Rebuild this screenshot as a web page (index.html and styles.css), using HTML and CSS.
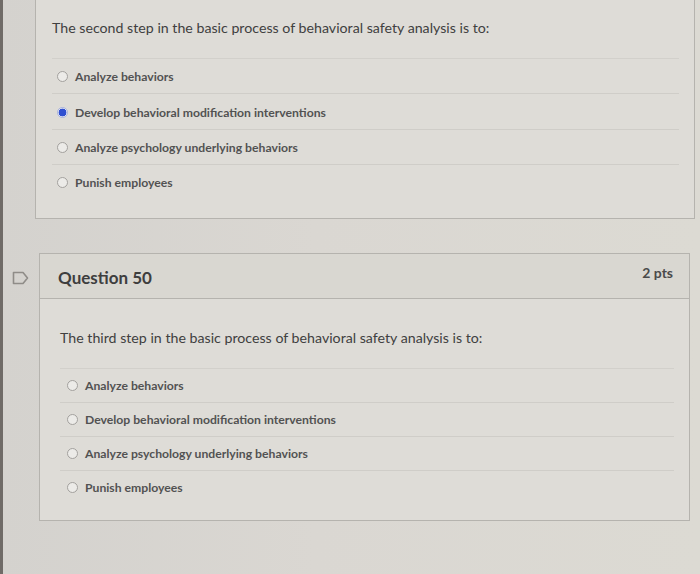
FILE: index.html
```html
<!DOCTYPE html>
<html lang="en">
<head>
<meta charset="utf-8">
<title>Quiz</title>
<link rel="stylesheet" href="styles.css">
</head>
<body>
<div class="page">
  <section class="card card-prev">
    <div class="card-body">
      <p class="prompt">The second step in the basic process of behavioral safety analysis is to:</p>
      <ul class="answers">
        <li class="answer"><span class="radio"></span><span>Analyze behaviors</span></li>
        <li class="answer"><span class="radio checked"></span><span>Develop behavioral modification interventions</span></li>
        <li class="answer"><span class="radio"></span><span>Analyze psychology underlying behaviors</span></li>
        <li class="answer"><span class="radio"></span><span>Punish employees</span></li>
      </ul>
    </div>
  </section>

  <div class="question-row">
    <svg class="flag" width="17" height="14" viewBox="0 0 17 14">
      <path d="M1.5 1.5 H11 L15.5 7 L11 12.5 H1.5 Z" fill="none" stroke="#8f8c88" stroke-width="1.6" stroke-linejoin="round"/>
    </svg>
    <section class="card card-current">
      <header class="card-header">
        <h2 class="q-title">Question 50</h2>
        <span class="pts">2 pts</span>
      </header>
      <div class="card-body">
        <p class="prompt">The third step in the basic process of behavioral safety analysis is to:</p>
        <ul class="answers">
          <li class="answer"><span class="radio"></span><span>Analyze behaviors</span></li>
          <li class="answer"><span class="radio"></span><span>Develop behavioral modification interventions</span></li>
          <li class="answer"><span class="radio"></span><span>Analyze psychology underlying behaviors</span></li>
          <li class="answer"><span class="radio"></span><span>Punish employees</span></li>
        </ul>
      </div>
    </section>
  </div>
</div>
</body>
</html>
```

FILE: styles.css
```css
* { box-sizing: border-box; }

html, body {
  margin: 0;
  height: 100%;
}

body {
  background: linear-gradient(90deg, #d4d2ce 0%, #dad7d2 45%, #dcdad3 100%);
  border-left: 3px solid #6f6b67;
  font-family: Lato, "Open Sans", sans-serif;
  color: #454545;
  overflow: hidden;
}

.page {
  display: flex;
  flex-direction: column;
  height: 574px;
}

.card {
  background: #dedcd7;
  border: 1.5px solid #b5b3ae;
}

.card-prev {
  margin-left: 32px;
  margin-right: 5px;
  border-top: none;
  height: 219px;
}

.card-prev .card-body {
  padding: 19px 15px 0 16px;
}

.question-row {
  display: flex;
  align-items: flex-start;
  margin-top: 34px;
  margin-left: 9px;
  margin-right: 10px;
}

.flag {
  margin-top: 18px;
  flex: none;
}

.card-current {
  flex: 1;
  margin-left: 10px;
  height: 268px;
}

.card-header {
  display: flex;
  justify-content: space-between;
  align-items: center;
  height: 45px;
  padding: 0 16px 0 18px;
  background: #d9d7d1;
  border-bottom: 1.5px solid #b5b3ae;
}

.q-title {
  margin: 0;
  font-size: 17px;
  font-weight: 700;
  color: #3e3e3e;
  padding-top: 3px;
}

.pts {
  font-size: 14px;
  font-weight: 700;
  color: #4a4a4a;
  margin-top: -8px;
}

.card-current .card-body {
  padding: 30px 15px 0 20px;
}

.prompt {
  margin: 0;
  font-size: 14.2px;
  line-height: 18px;
  color: #404040;
}

.answers {
  list-style: none;
  margin: 21px 0 0 0;
  padding: 0;
}

.answer {
  display: flex;
  align-items: center;
  gap: 7px;
  height: 35.4px;
  padding-left: 5px;
  padding-top: 1px;
  border-top: 1.5px solid #cfcdc8;
  font-size: 12.2px;
  font-weight: 700;
  color: #525252;
}

.card-current .answer {
  height: 34px;
  padding-top: 0;
  padding-left: 7px;
}

.answer:first-child {
  border-top-color: #d2d0cb;
}

.radio {
  width: 11px;
  height: 11px;
  border-radius: 50%;
  border: 1.2px solid #a3a19e;
  background: #ecebe8;
  flex: none;
}

.radio.checked {
  border: 1.5px solid #a9b3de;
  background: radial-gradient(circle, #2f4fd0 0 3.6px, #e6e8f3 4.2px);
}
```
